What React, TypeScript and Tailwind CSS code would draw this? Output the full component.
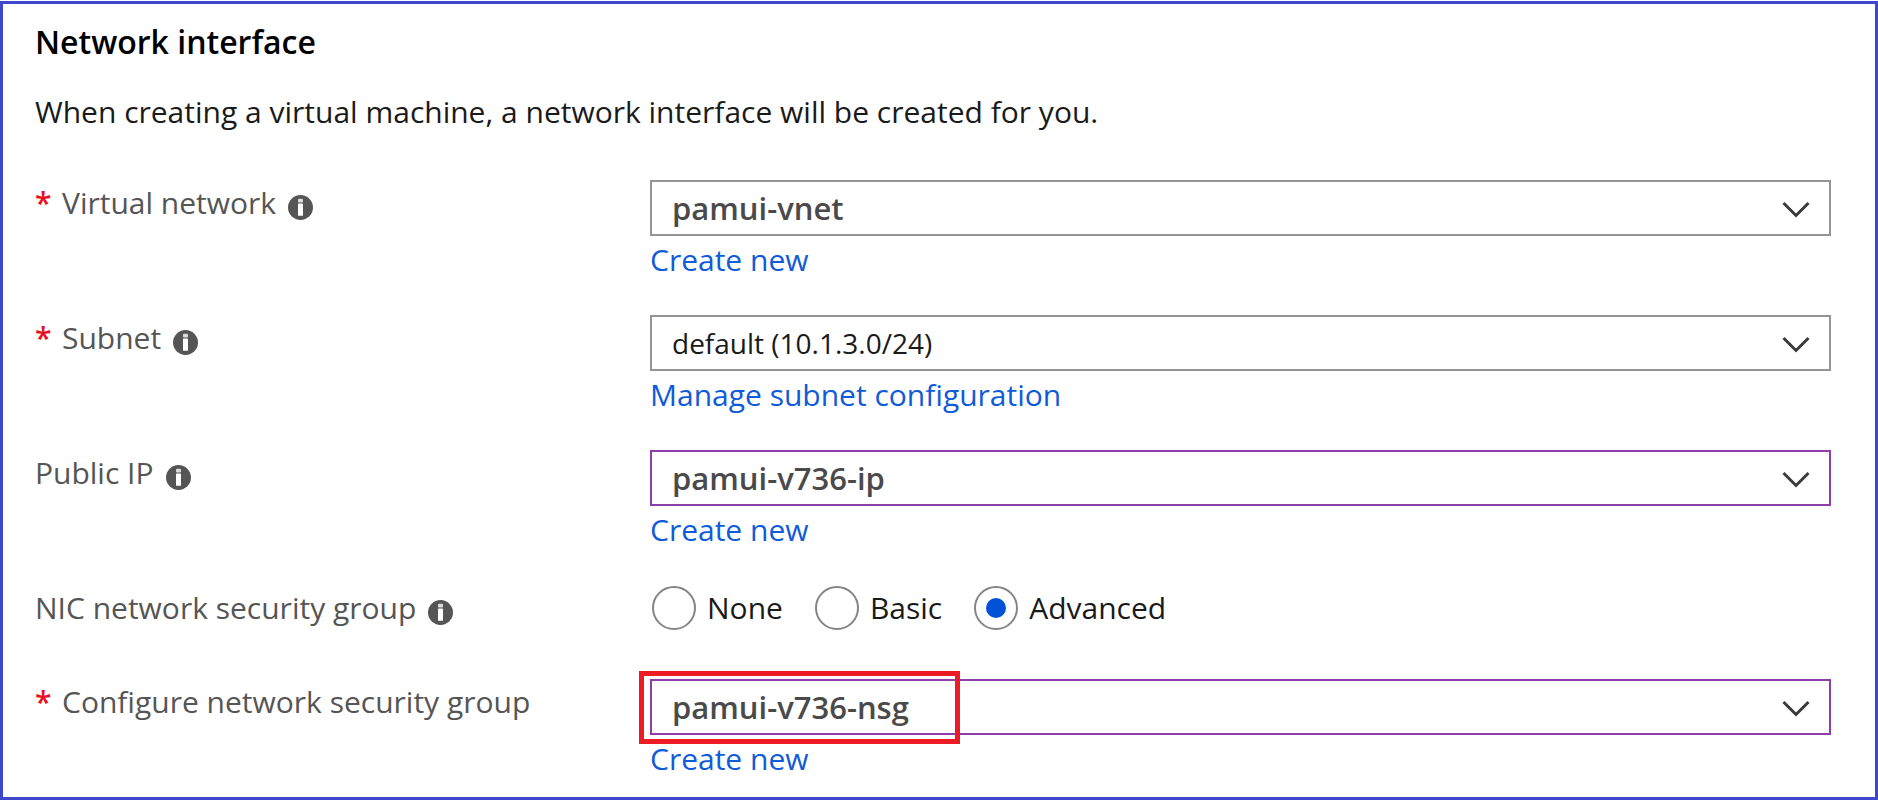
import type { ReactNode } from 'react'

function InfoIcon() {
  return (
    <svg viewBox="0 0 25 25" className="mt-2 size-[25px] shrink-0" aria-hidden="true">
      <circle cx="12.5" cy="12.5" r="12.5" fill="#555555" />
      <rect x="10" y="3.8" width="5" height="3.6" rx="1" fill="#dcdcdc" />
      <rect x="10" y="8.6" width="5" height="12.2" rx="0.6" fill="#ffffff" />
    </svg>
  )
}

function Chevron() {
  return (
    <svg
      viewBox="0 0 28 18"
      className="pointer-events-none absolute top-[21px] right-[21px] h-[18px] w-7"
      fill="none"
      stroke="#3a3a3a"
      strokeWidth="3"
      aria-hidden="true"
    >
      <path d="M1.5 2 14 14.5 26.5 2" />
    </svg>
  )
}

function FieldLabel({
  htmlFor,
  id,
  required,
  info,
  children,
}: {
  htmlFor?: string
  id?: string
  required?: boolean
  info?: boolean
  children: ReactNode
}) {
  const Tag = htmlFor ? 'label' : 'div'
  return (
    <Tag htmlFor={htmlFor} id={id} className="flex h-[46px] items-center gap-3 text-[#555555]">
      <span className="flex">
        {required && <span className="w-[27px] font-semibold text-[#e81123]">*</span>}
        {children}
      </span>
      {info && <InfoIcon />}
    </Tag>
  )
}

function SelectField({
  id,
  label,
  value,
  link,
  required,
  info = true,
  edited,
  bold = true,
  highlight,
}: {
  id: string
  label: string
  value: string
  link: string
  required?: boolean
  info?: boolean
  edited?: boolean
  bold?: boolean
  highlight?: boolean
}) {
  return (
    <div className="grid grid-cols-[615px_1fr]">
      <FieldLabel htmlFor={id} required={required} info={info}>
        {label}
      </FieldLabel>
      <div>
        <div className="relative">
          <select
            id={id}
            className={`block h-14 w-full appearance-none border-2 bg-white pl-5 ${
              edited ? 'border-[#8f3fa8]' : 'border-[#949494]'
            } ${bold ? 'text-[31px] font-semibold text-[#4a4a4a]' : 'text-[28px] text-[#1a1a1a]'}`}
          >
            <option>{value}</option>
          </select>
          <Chevron />
          {highlight && (
            <div className="pointer-events-none absolute -top-2 -left-[11px] h-[73px] w-[321px] border-[5px] border-[#ed1c24]" />
          )}
        </div>
        <a href="#" className="mt-1 inline-block font-medium text-[#0f5bd8]">
          {link}
        </a>
      </div>
    </div>
  )
}

function Radio({ label, checked }: { label: string; checked?: boolean }) {
  return (
    <label className="flex items-center gap-[11px]">
      <input
        type="radio"
        name="nic-nsg"
        defaultChecked={checked}
        className="size-11 appearance-none rounded-full border-2 border-[#848484] bg-white bg-clip-content p-[10px] checked:bg-[#0050d8]"
      />
      {label}
    </label>
  )
}

export default function App() {
  return (
    <div className="min-h-screen bg-white pt-px">
      <form className="min-h-[799px] border-3 border-[#3f48cc] pr-11 pl-8 font-['Open_Sans','Noto_Sans',sans-serif] text-[30px] leading-10 text-[#1a1a1a]">
        <h2 className="mt-[18px] text-[32px] leading-10 font-semibold text-black">Network interface</h2>
        <p className="mt-[30px]">
          When creating a virtual machine, a network interface will be created for you.
        </p>

        <div className="mt-12 flex flex-col gap-[35px]">
          <SelectField id="vnet" label="Virtual network" value="pamui-vnet" link="Create new" required />
          <SelectField
            id="subnet"
            label="Subnet"
            value="default (10.1.3.0/24)"
            link="Manage subnet configuration"
            required
            bold={false}
          />
          <SelectField id="public-ip" label="Public IP" value="pamui-v736-ip" link="Create new" edited />

          <div className="grid grid-cols-[615px_1fr] pb-[13px]">
            <FieldLabel id="nic-nsg-label" info>
              NIC network security group
            </FieldLabel>
            <div role="radiogroup" aria-labelledby="nic-nsg-label" className="flex gap-8 pl-0.5">
              <Radio label="None" />
              <Radio label="Basic" />
              <Radio label="Advanced" checked />
            </div>
          </div>

          <SelectField
            id="nsg"
            label="Configure network security group"
            value="pamui-v736-nsg"
            link="Create new"
            required
            info={false}
            edited
            highlight
          />
        </div>
      </form>
    </div>
  )
}
